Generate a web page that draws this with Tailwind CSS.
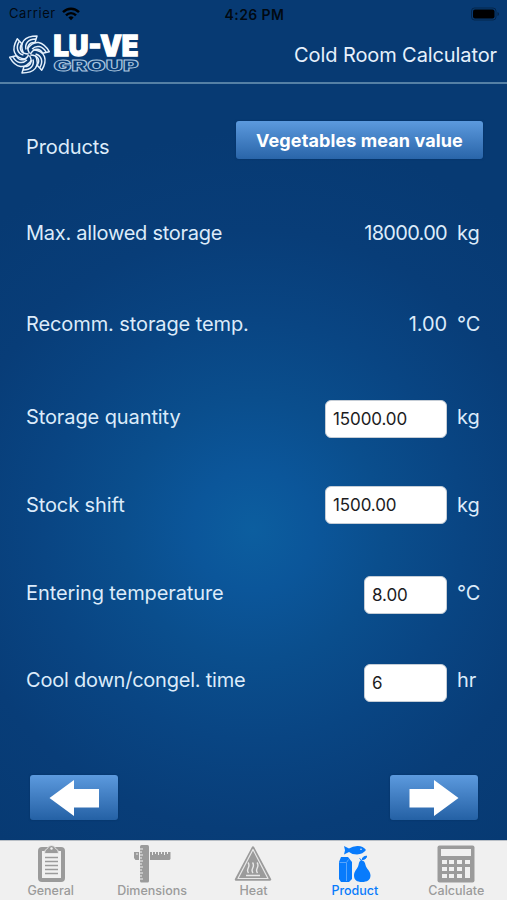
<!DOCTYPE html>
<html lang="en">

<head>
    <meta charset="UTF-8">
    <meta name="viewport" content="width=device-width, initial-scale=1.0">
    <title>Cold Room Calculator</title>
    <script src="https://cdn.jsdelivr.net/npm/@tailwindcss/browser@4"></script>
</head>

<body class="bg-[#083c76] font-['Inter',sans-serif]">
    <div class="flex flex-col w-[507px] h-[900px] overflow-hidden bg-[radial-gradient(circle_at_253px_530px,#0c5e9f_0px,#0b569a_60px,#0a4e8d_130px,#094583_210px,#083d78_300px,#073a73_400px)]">
        <!-- Status bar -->
        <div class="grid grid-cols-3 items-center h-7 pl-[9px] pr-[7px] text-[13px] text-black/85">
            <div class="flex items-center gap-[6px]">
                <span class="tracking-[0.6px]">Carrier</span>
                <svg class="w-[18px] h-[14px]" viewBox="0 0 18 14" fill="none" stroke="#000" stroke-width="2.4">
                    <path d="M1 5.2C5.5 .6 12.5 .6 17 5.2" />
                    <path d="M4 8.4C6.8 5.4 11.2 5.4 14 8.4" />
                    <path d="M6.4 10.4Q9 8.2 11.6 10.4L9 13.2Z" fill="#000" stroke="none" />
                </svg>
            </div>
            <span class="text-center text-[14px] font-semibold tracking-[0.4px]">4:26 PM</span>
            <svg class="justify-self-end w-[29px] h-[14px]" viewBox="0 0 29 14">
                <rect x=".5" y="1" width="24.500" height="12" rx="3" fill="none" stroke="#000" stroke-opacity=".35" />
                <rect x="2" y="2.500" width="21.500" height="9" rx="2" fill="#000" />
                <path d="M26.500 5v4q1.500-.6 1.500-2t-1.500-2Z" fill="#000" fill-opacity=".4" />
            </svg>
        </div>

        <!-- Header -->
        <header class="flex items-center justify-between h-14 pl-[10px] pr-[10px] border-b-2 border-[#5580a5]">
            <svg class="w-[132px] h-[44px] overflow-visible" viewBox="0 0 132 44">
                <g transform="translate(19.500 21.500)" fill="none" stroke="#e4f0fc" stroke-width="1.500" stroke-linejoin="round">
                    <path id="blade" d="M-6-1C-11-12-5-18.500 7.500-18.500L5.500-12C0-12.500-4-8 0-1M-3.500-5C-5-11-1-15.500 6-15.500" />
                    <use href="#blade" transform="rotate(60)" />
                    <use href="#blade" transform="rotate(120)" />
                    <use href="#blade" transform="rotate(180)" />
                    <use href="#blade" transform="rotate(240)" />
                    <use href="#blade" transform="rotate(300)" />
                </g>
                <text x="43.500" y="22.500" class="font-['Inter',sans-serif] font-black" font-size="28" textLength="85" lengthAdjust="spacingAndGlyphs" fill="#fff" stroke="#fff" stroke-width="1.300">LU-VE</text>
                <text x="43.500" y="37.500" class="font-['Inter',sans-serif] font-black" font-size="14.500" textLength="85" lengthAdjust="spacingAndGlyphs" fill="#083c76" stroke="#a9c4df" stroke-width=".8">GROUP</text>
            </svg>
            <h1 class="text-[20px] text-[#e6f1fc] tracking-[-0.1px]">Cold Room Calculator</h1>
        </header>

        <!-- Form -->
        <main class="flex flex-col h-[756px] pl-[26px] pr-[24px] pt-[43px] text-[20px] text-[#dcebfa] tracking-[-0.1px]">
            <div class="flex items-center justify-between h-10">
                <span>Products</span>
                <button class="w-[247px] h-[38px] mb-[14px] rounded-[3px] bg-linear-to-b from-[#5c9ade] to-[#2965a9] text-[18px] font-bold tracking-[0.1px] text-white shadow-[0_0_2px_#052f60]">Vegetables mean value</button>
            </div>
            <div class="flex items-center h-10 mt-[46px]">
                <span class="flex-1 tracking-[-0.25px]">Max. allowed storage</span>
                <span class="tracking-[-0.7px]">18000.00</span>
                <span class="w-[26px] ml-[10px]">kg</span>
            </div>
            <div class="flex items-center h-10 mt-[51px]">
                <span class="flex-1">Recomm. storage temp.</span>
                <span>1.00</span>
                <span class="w-[26px] ml-[10px]">°C</span>
            </div>
            <div class="flex items-center h-10 mt-[53px]">
                <label for="quantity" class="flex-1">Storage quantity</label>
                <input id="quantity" type="text" value="15000.00" class="w-[122px] h-[38px] mt-[3px] px-[7px] rounded-[6px] border border-[#c5cdd6] bg-white text-[17px] text-[#1c1c1e]">
                <span class="w-[26px] ml-[10px]">kg</span>
            </div>
            <div class="flex items-center h-10 mt-[48px]">
                <label for="shift" class="flex-1">Stock shift</label>
                <input id="shift" type="text" value="1500.00" class="w-[122px] h-[38px] px-[7px] rounded-[6px] border border-[#c5cdd6] bg-white text-[17px] text-[#1c1c1e]">
                <span class="w-[26px] ml-[10px]">kg</span>
            </div>
            <div class="flex items-center h-10 mt-[48px]">
                <label for="temperature" class="flex-1">Entering temperature</label>
                <input id="temperature" type="text" value="8.00" class="w-[83px] h-[38px] mt-[4px] px-[7px] rounded-[6px] border border-[#c5cdd6] bg-white text-[17px] text-[#1c1c1e]">
                <span class="w-[26px] ml-[10px]">°C</span>
            </div>
            <div class="flex items-center h-10 mt-[47px]">
                <label for="time" class="flex-1 tracking-[-0.22px]">Cool down/congel. time</label>
                <input id="time" type="text" value="6" class="w-[83px] h-[38px] mt-[6px] px-[7px] rounded-[6px] border border-[#c5cdd6] bg-white text-[17px] text-[#1c1c1e]">
                <span class="w-[26px] ml-[10px]">hr</span>
            </div>
            <div class="flex justify-between mt-[75px] pl-1 pr-[5px]">
                <button class="w-[88px] h-[45px] rounded-[3px] bg-linear-to-b from-[#5c9ade] to-[#2461a5] shadow-[0_0_2px_#052f60]" aria-label="Back">
                    <svg class="w-[88px] h-[45px]" viewBox="0 0 88 45" fill="#fff">
                        <path d="M19.500 23L44 5V14H69V32.500H44V41Z" />
                    </svg>
                </button>
                <button class="w-[88px] h-[45px] rounded-[3px] bg-linear-to-b from-[#5c9ade] to-[#2461a5] shadow-[0_0_2px_#052f60]" aria-label="Next">
                    <svg class="w-[88px] h-[45px]" viewBox="0 0 88 45" fill="#fff">
                        <path d="M68.500 23L44 5V14H19.500V32.500H44V41Z" />
                    </svg>
                </button>
            </div>
        </main>

        <!-- Tab bar -->
        <nav class="grid grid-cols-5 h-[60px] border-t border-[#b9bfc6] bg-[#f0f0f0] text-[12.5px] font-medium text-[#9b9b9b] leading-4">
            <a class="flex flex-col items-center pt-1">
                <svg class="w-[38px] h-[38px]" viewBox="0 0 38 38">
                    <rect x="6" y="2" width="27" height="35" rx="4" fill="#9b9b9b" />
                    <rect x="10" y="6" width="19" height="27" fill="#f0f0f0" />
                    <path d="M12.500 8.500Q12.500 4 15.500 3.500Q16 .5 19.500 .5T23.500 3.500Q26.500 4 26.500 8.500Z" fill="#9b9b9b" stroke="#f0f0f0" stroke-width=".8" />
                    <circle cx="19.500" cy="3.500" r="1.200" fill="#f0f0f0" />
                    <path d="M13 12.500H26M13 16.500H26M13 20.500H26M13 24.500H26M13 28.500H26" stroke="#9b9b9b" stroke-width="1.700" />
                </svg>
                <span>General</span>
            </a>
            <a class="flex flex-col items-center pt-1">
                <svg class="w-[38px] h-[38px]" viewBox="0 0 38 38">
                    <path d="M1 7H6V15H2.500L1 13ZM17 7H37.500V14L36.500 15H17Z" fill="#9b9b9b" />
                    <path d="M19.500 6.500V10M22.500 6.500V9M25.500 6.500V10M28.500 6.500V9M31.500 6.500V10M34.500 6.500V9M4 8V10" stroke="#f0f0f0" />
                    <rect x="7" y="0" width="9" height="37.500" rx="1.500" fill="#9b9b9b" />
                    <path d="M7 4H10M7 7H9M7 10H10M7 13H9M7 16H10M7 19H9M7 22H10M7 25H9M7 28H10M7 31H9M7 34H10" stroke="#f0f0f0" />
                </svg>
                <span>Dimensions</span>
            </a>
            <a class="flex flex-col items-center pt-1">
                <svg class="w-[38px] h-[38px]" viewBox="0 0 38 38" fill="none">
                    <path d="M19 2.500L36 34.500H2Z" fill="#9b9b9b" stroke="#9b9b9b" stroke-width="2.500" stroke-linejoin="round" />
                    <path d="M19 4.500L34 33.500H4Z" stroke="#e8e8e8" stroke-width="1.200" stroke-linejoin="round" />
                    <path d="M12 30.500H26M14.500 28C11 24 17.500 22 14 17.500M19 28C15.500 24 22 22 18.500 17.500M23.500 28C20 24 26.500 22 23 17.500" stroke="#e8e8e8" stroke-width="1.400" />
                </svg>
                <span>Heat</span>
            </a>
            <a class="flex flex-col items-center pt-1 text-[#087bfc]">
                <svg class="w-[38px] h-[38px]" viewBox="0 0 38 38" fill="#087bfc">
                    <path d="M8 1L13 3.500Q17 .8 22 1Q27 1.200 30 5Q27 9 21 9.500Q16 9.500 13 7L8 9.500L9 5.200Z" />
                    <circle cx="25" cy="4.200" r=".8" fill="#f0f0f0" />
                    <path d="M5 12H12L16 17V34L13 37H5L3 34V17Z" />
                    <path d="M3.500 17.500H10M10.500 17.500L12.500 14.500M10.500 17.500V36" fill="none" stroke="#7cb8fb" stroke-width=".7" />
                    <path d="M25.500 15.500C28 15.500 29 17.500 29.500 20C30.500 24 34.500 26 34.500 30.500C34.500 35 31 37 26 37S18 35 18 30.500C18 26 21.500 24 22.500 20C23 17.500 23.500 15.500 25.500 15.500Z" />
                    <path d="M25.500 16Q25 14 23.500 13.500M26 14.500Q26.500 11.500 30.500 11Q30.500 14.500 26 14.500Z" stroke="#087bfc" />
                </svg>
                <span>Product</span>
            </a>
            <a class="flex flex-col items-center pt-1">
                <svg class="w-[38px] h-[38px]" viewBox="0 0 38 38">
                    <rect x=".5" y=".5" width="37" height="37" rx="2" fill="#9b9b9b" />
                    <g fill="#f0f0f0">
                        <rect x="4" y="4" width="30" height="7" />
                        <path d="M5 15h5v4h-5zM12 15h5v4h-5zM20 15h5v4h-5zM28 15h5v4h-5zM5 22h5v4h-5zM12 22h5v4h-5zM20 22h5v4h-5zM5 29h5v4h-5zM12 29h5v4h-5zM20 29h5v4h-5zM28 22h5v11h-5z" />
                    </g>
                </svg>
                <span>Calculate</span>
            </a>
        </nav>
    </div>
</body>

</html>
